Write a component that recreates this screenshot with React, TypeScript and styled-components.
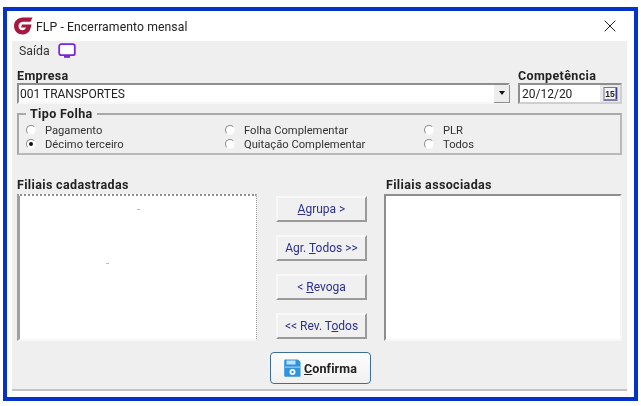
import React from "react";
import styled, { createGlobalStyle } from "styled-components";

const Global = createGlobalStyle`
  html, body { margin: 0; padding: 0; background: #fff; }
  body { font-family: Roboto, "Noto Sans", sans-serif; color: #1a1a1a; overflow: hidden; }
  * { box-sizing: border-box; }
`;

const Frame = styled.div`
  width: 635px; height: 394px; margin: 7px 0 0 3px;
  border: 4px solid #0533c9; background: #fff;
  display: flex; flex-direction: column;
  filter: blur(0.3px);
`;
const TitleBar = styled.div`
  height: 30px; flex: none; display: flex; align-items: center;
  padding: 0 18px 0 6px; gap: 3px;
`;
const Title = styled.span`font-size: 12.2px; letter-spacing: 0.1px; flex: 1; color: #222; padding-top: 1px;`;
const Panel = styled.div`
  width: 615px; height: 350px; margin-left: 5px; padding: 0 5px;
  background: #efefef; border-bottom: 2px solid #c4c4c4;
  display: flex; flex-direction: column;
`;
const MenuBar = styled.div`
  height: 20px; display: flex; align-items: center; gap: 8px; padding: 0 2px;
  font-size: 12.3px; color: #333;
`;
const TopRow = styled.div`
  display: grid; grid-template-columns: 493px 104px; column-gap: 8px; margin-top: 7px;
`;
const Field = styled.div`display: flex; flex-direction: column;`;
const Label = styled.label`
  height: 15px; line-height: 15px; font-size: 12.5px; font-weight: 700; color: #222;
  letter-spacing: 0.35px; white-space: nowrap;
`;
const InputBox = styled.div`
  height: 21px; background: #fff; display: flex; align-items: center;
  border: 2px solid #f7f7f7; border-top-color: #8e8e8e; border-left-color: #8e8e8e;
  font-size: 12px; padding-left: 1px; color: #222; position: relative;
`;
const InputText = styled.span`flex: 1; white-space: nowrap;`;
const ComboArrow = styled.div`
  width: 16px; height: 18px; margin-right: -2px; background: #ededed;
  border-right: 1px solid #8e8e8e; border-bottom: 1px solid #8e8e8e;
  display: flex; align-items: center; justify-content: center;
  &::after { content: ""; border: 3.5px solid transparent; border-top: 4px solid #111; border-bottom: 0; }
`;
const DateBox = styled(InputBox)`
  border-color: #8e8e8e #cfcfcf #cfcfcf #8e8e8e;
  padding-left: 2px;
`;
const CalendarButton = styled.div`
  width: 20px; height: 17px; display: flex; align-items: center; justify-content: center;
  background: #e9e9e9;
`;
const Group = styled.div`
  position: relative; height: 42px; margin-top: 9px; padding: 8px 0 0 7px;
  border: 2px solid #a9a9a9; border-right-color: #b9b9b9; border-bottom-color: #b9b9b9;
  display: grid; grid-template-columns: repeat(3, 199px); grid-auto-flow: row; grid-auto-rows: 14px;
`;
const Legend = styled.span`
  position: absolute; left: 7px; top: -9px; padding: 0 4px; background: #efefef;
  font-size: 12.5px; font-weight: 700; line-height: 15px; color: #222; letter-spacing: 0.35px;
`;
const RadioRow = styled.div`
  display: flex; align-items: center; gap: 9px; font-size: 11.2px; color: #333; white-space: nowrap;
`;
const RadioMark = styled.span<{ $on?: boolean }>`
  width: 10px; height: 10px; border-radius: 50%; flex: none; margin-left: 0;
  background: #fff; border: 1px solid #f8f8f8; border-top-color: #8c8c8c; border-left-color: #8c8c8c;
  display: flex; align-items: center; justify-content: center;
  &::after { content: ""; width: 4px; height: 4px; border-radius: 50%; background: ${p => (p.$on ? "#111" : "transparent")}; }
`;
const ListsRow = styled.div`
  display: grid; grid-template-columns: 240px 127px 238px; margin-top: 22px;
`;
const ListLabel = styled(Label)<{ $indent?: boolean }>`
  display: block; margin-bottom: 2px; padding-left: ${p => (p.$indent ? "2px" : "0")};
`;
const ListBox = styled.div<{ $focus?: boolean }>`
  height: 147px; background: #fff; position: relative;
  border: 2px solid #f7f7f7; border-top-color: #8e8e8e; border-left-color: #8e8e8e;
  ${p => p.$focus && `
    border-top: 2px dotted #8e8e8e; border-right: 1px dotted #9a9a9a;
    border-left: 3px solid #a0a0a0;
  `}
`;
const Speck = styled.i<{ $x: number; $y: number }>`
  position: absolute; left: ${p => p.$x}px; top: ${p => p.$y}px; width: 3px; height: 1px; background: #bdbdbd;
`;
const ButtonColumn = styled.div`
  display: flex; flex-direction: column; gap: 13px; padding: 19px 0 0 19px;
`;
const MoveButton = styled.button`
  width: 91px; height: 26px; padding: 0; background: #f0f0f0; font: inherit; font-size: 12px; color: #2b2f8f;
  border: 2px solid #f8f8f8; border-right-color: #9a9a9a; border-bottom-color: #9a9a9a;
  u { text-underline-offset: 1px; }
`;
const Footer = styled.div`display: flex; padding: 11px 0 0 253px;`;
const ConfirmButton = styled.button`
  width: 101px; height: 32px; padding: 0; border-radius: 4px; background: linear-gradient(#fdfdfd, #f0f0f0);
  border: 1.5px solid #3d6f96; display: flex; align-items: center; justify-content: center; gap: 3px;
  font: inherit; font-size: 12.5px; font-weight: 700; color: #222; letter-spacing: 0.1px;
`;

const Logo = () => (
  <svg width="20" height="20" viewBox="0 0 20 20">
    <path d="M10 1.5 C5 1.5 1 5 1 10 C1 15 5 18.5 9.5 18.5 C13.5 18.5 16.5 16 17.5 12.5 L18.5 8.5 L9 8.5 L8 11.5 L13 11.5 C12.5 13 11 14.2 9.5 14.2 C7 14.2 5.5 12.4 5.5 10 C5.5 7.5 7.5 5.8 10 5.8 L17.5 5.8 L19.5 1.5 Z" fill="#a8173f" />
  </svg>
);
const Monitor = () => (
  <svg width="18" height="16" viewBox="0 0 18 16">
    <rect x="1.2" y="1.2" width="15.6" height="11" rx="2" fill="#fff" stroke="#7a24dc" strokeWidth="1.8" />
    <rect x="6" y="13" width="6" height="1.8" fill="#7a24dc" />
  </svg>
);
const CalendarIcon = () => (
  <svg width="15" height="14" viewBox="0 0 15 14">
    <rect x="1" y="0.5" width="13" height="13" fill="#f4f4f4" stroke="#77779a" />
    <rect x="12.5" y="1" width="1.5" height="12" fill="#3c3c86" />
    <rect x="1" y="12" width="13" height="1.5" fill="#7f7fae" />
    <text x="2.3" y="10" fontSize="8.5" fontWeight="700" fontFamily="Liberation Sans, sans-serif" fill="#222">15</text>
  </svg>
);
const Floppy = () => (
  <svg width="17" height="18" viewBox="0 0 17 18">
    <path d="M1 0.5 H14 L16.5 3 V17 a0.8 0.8 0 0 1 -0.8 0.8 H1 a0.8 0.8 0 0 1 -0.8 -0.8 V1.3 a0.8 0.8 0 0 1 0.8 -0.8 Z" fill="#2f93de" />
    <rect x="2.5" y="1.5" width="9" height="4" fill="#bfe0f7" />
    <rect x="1" y="7.5" width="15" height="1.4" fill="#8cc6ee" />
    <circle cx="8.5" cy="13" r="3" fill="#fff" />
    <circle cx="8.5" cy="13" r="1.2" fill="#2f93de" />
  </svg>
);
const CloseIcon = () => (
  <svg width="12" height="12" viewBox="0 0 12 12">
    <path d="M0.7 0.7 L11.3 11.3 M11.3 0.7 L0.7 11.3" stroke="#222" strokeWidth="1" fill="none" />
  </svg>
);

const radios = [
  ["Pagamento", false], ["Folha Complementar", false], ["PLR", false],
  ["Décimo terceiro", true], ["Quitação Complementar", false], ["Todos", false],
] as const;

export default function App() {
  return (
    <>
      <Global />
      <Frame>
        <TitleBar>
          <Logo />
          <Title>FLP - Encerramento mensal</Title>
          <CloseIcon />
        </TitleBar>
        <Panel>
          <MenuBar>
            <span>Saída</span>
            <Monitor />
          </MenuBar>
          <TopRow>
            <Field>
              <Label>Empresa</Label>
              <InputBox>
                <InputText>001 TRANSPORTES</InputText>
                <ComboArrow />
              </InputBox>
            </Field>
            <Field>
              <Label>Competência</Label>
              <DateBox>
                <InputText>20/12/20</InputText>
                <CalendarButton><CalendarIcon /></CalendarButton>
              </DateBox>
            </Field>
          </TopRow>
          <Group>
            <Legend>Tipo Folha</Legend>
            {radios.map(([label, on]) => (
              <RadioRow key={label}>
                <RadioMark $on={on} />
                <span>{label}</span>
              </RadioRow>
            ))}
          </Group>
          <ListsRow>
            <div>
              <ListLabel>Filiais cadastradas</ListLabel>
              <ListBox $focus>
                <Speck $x={117} $y={13} />
                <Speck $x={86} $y={67} />
              </ListBox>
            </div>
            <ButtonColumn>
              <MoveButton><u>A</u>grupa &gt;</MoveButton>
              <MoveButton>Agr. <u>T</u>odos &gt;&gt;</MoveButton>
              <MoveButton>&lt; <u>R</u>evoga</MoveButton>
              <MoveButton>&lt;&lt; Rev. T<u>o</u>dos</MoveButton>
            </ButtonColumn>
            <div>
              <ListLabel $indent>Filiais associadas</ListLabel>
              <ListBox />
            </div>
          </ListsRow>
          <Footer>
            <ConfirmButton><Floppy /><span><u>C</u>onfirma</span></ConfirmButton>
          </Footer>
        </Panel>
      </Frame>
    </>
  );
}
